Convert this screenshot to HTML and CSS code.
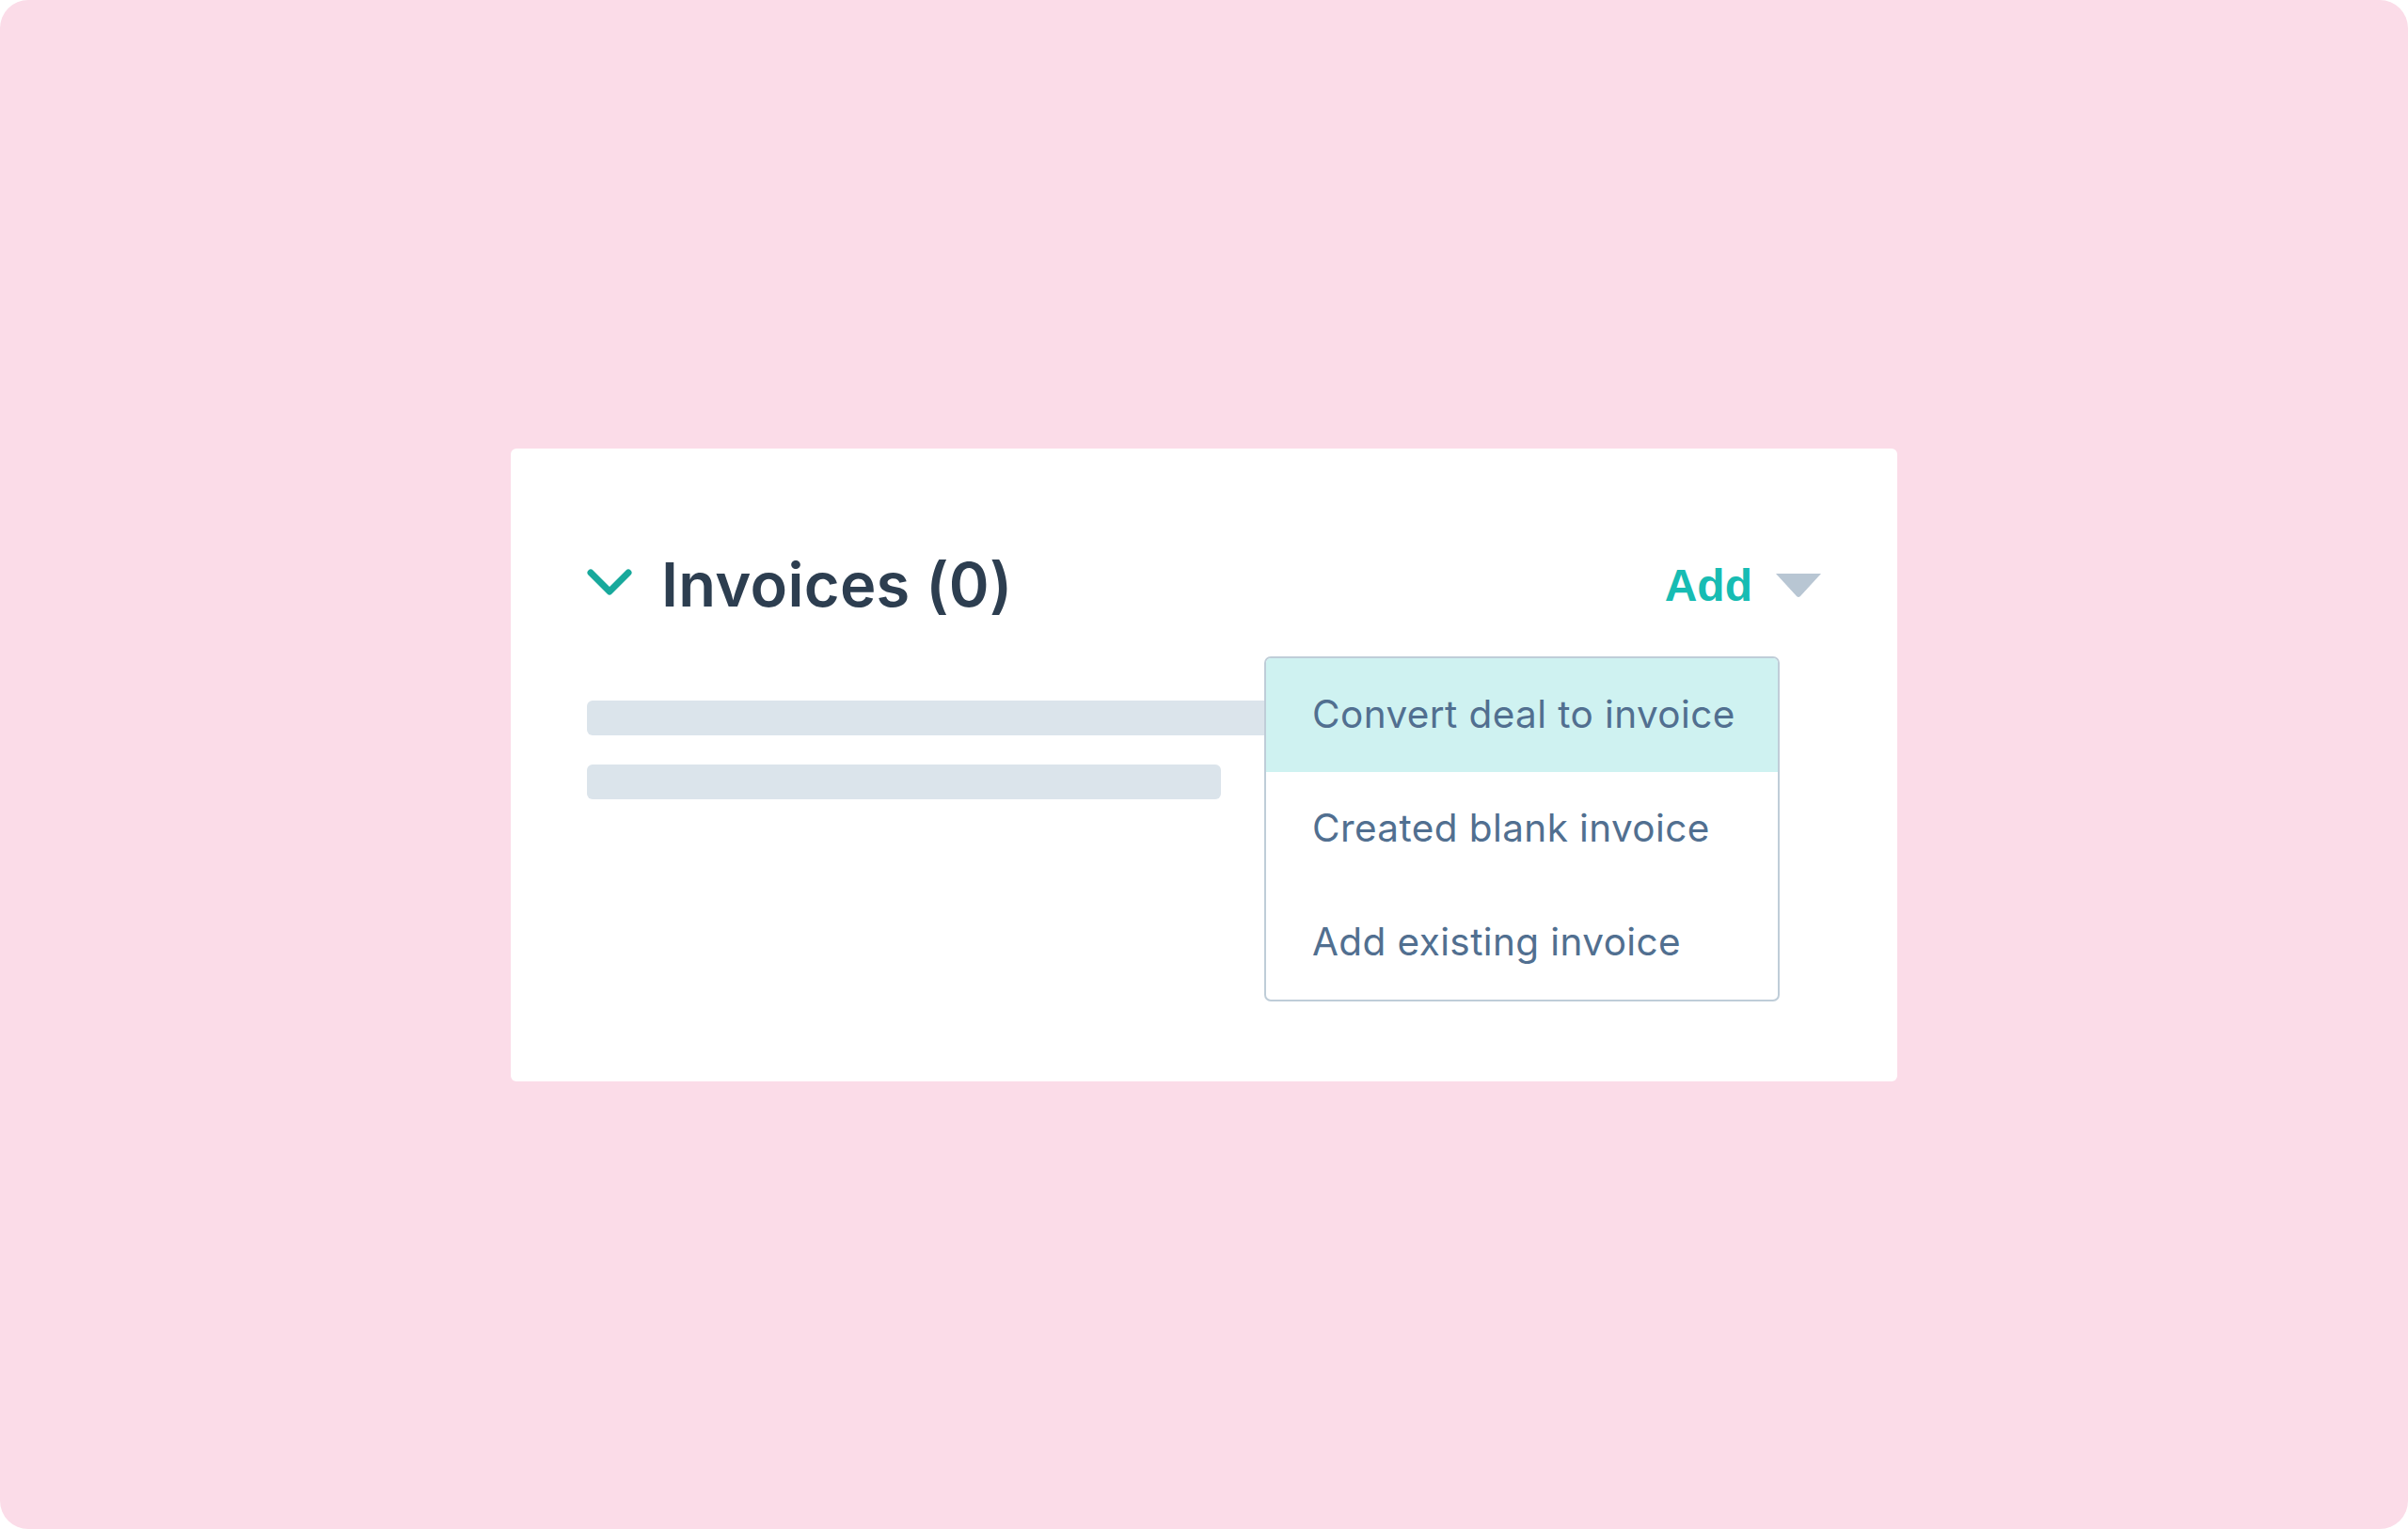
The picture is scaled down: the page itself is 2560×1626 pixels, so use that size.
FILE: index.html
```html
<!DOCTYPE html>
<html lang="en">
<head>
<meta charset="utf-8">
<title>Invoices</title>
<link rel="stylesheet" href="styles.css">
</head>
<body>
<div class="page">
  <section class="card">
    <header class="card-head">
      <div class="title-wrap">
        <svg class="chev" width="48" height="30" viewBox="0 0 48 30" aria-hidden="true">
          <polyline points="4,5 24,25 44,5" fill="none" stroke="#18a99c" stroke-width="7" stroke-linecap="round" stroke-linejoin="round"/>
        </svg>
        <h1 class="title">Invoices (0)</h1>
      </div>
      <div class="add">
        <span class="add-label">Add</span>
        <svg class="caret" width="50" height="27" viewBox="0 0 50 27" aria-hidden="true">
          <path d="M1 1 H49 L27 25 Q25 27 23 25 Z" fill="#b8c6d3"/>
        </svg>
      </div>
    </header>
    <div class="skeleton">
      <div class="bar bar-long"></div>
      <div class="bar bar-short"></div>
    </div>
    <ul class="menu">
      <li class="menu-item active">Convert deal to invoice</li>
      <li class="menu-item">Created blank invoice</li>
      <li class="menu-item">Add existing invoice</li>
    </ul>
  </section>
</div>
</body>
</html>
```

FILE: styles.css
```css
* { box-sizing: border-box; }
html, body { margin: 0; padding: 0; background: #ffffff; }
body { width: 2560px; height: 1626px; overflow: hidden; font-family: Inter, "Noto Sans", sans-serif; }

.page {
  width: 2560px;
  height: 1626px;
  background: #fbdce8;
  border-radius: 30px;
  display: flex;
  align-items: center;
  justify-content: center;
}

.card {
  position: relative;
  width: 1474px;
  height: 673px;
  background: #ffffff;
  border-radius: 6px;
  padding: 110px 80px 0 81px;
}

.card-head {
  display: flex;
  align-items: center;
  justify-content: space-between;
  height: 70px;
}

.title-wrap {
  display: flex;
  align-items: center;
  gap: 31px;
}

.chev { display: block; margin-top: -6px; }

.title {
  margin: 0;
  font-family: Inter, "Noto Sans", sans-serif;
  font-weight: 600;
  font-size: 65px;
  line-height: 70px;
  color: #2d3e50;
  letter-spacing: 0.3px;
}

.add {
  display: flex;
  align-items: center;
  gap: 24px;
  margin-top: 2px;
}

.add-label {
  font-family: "Liberation Sans", Arial, sans-serif;
  font-weight: 700;
  font-size: 48px;
  line-height: 60px;
  color: #17bcb3;
}

.caret { display: block; }

.skeleton {
  margin-top: 88px;
  display: flex;
  flex-direction: column;
  gap: 31px;
}

.bar {
  height: 37px;
  background: #dbe4eb;
  border-radius: 6px;
}
.bar-long { width: 900px; }
.bar-short { width: 674px; }

.menu {
  position: absolute;
  left: 801px;
  top: 221px;
  width: 548px;
  margin: 0;
  padding: 0;
  list-style: none;
  background: #ffffff;
  border: 2px solid #bfcdd8;
  border-radius: 7px;
  overflow: hidden;
}

.menu-item {
  height: 121px;
  display: flex;
  align-items: center;
  padding-left: 49px;
  padding-bottom: 2px;
  font-family: Inter, "Noto Sans", sans-serif;
  font-size: 40.5px;
  font-weight: 400;
  color: #516f90;
  letter-spacing: 0.4px;
}

.menu-item.active { background: #cff2f1; }
```
